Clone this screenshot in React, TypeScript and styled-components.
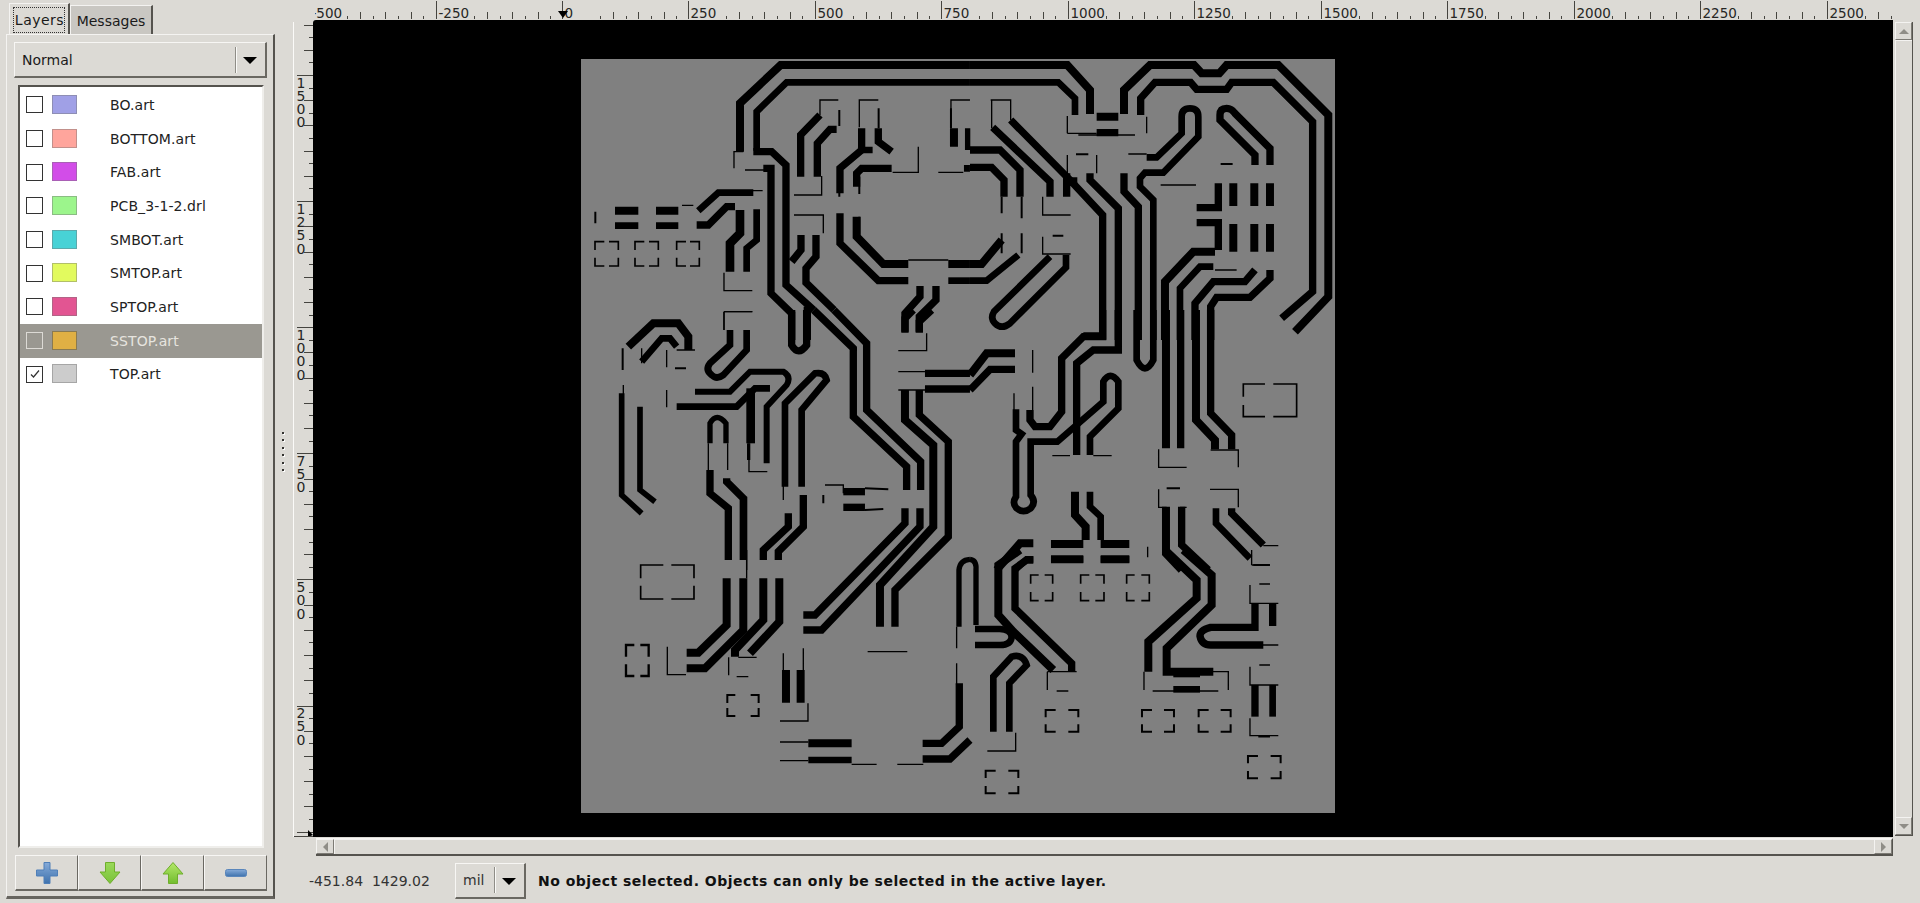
import React from "react";
import styled, { createGlobalStyle, css } from "styled-components";

const Global = createGlobalStyle`
  html, body { margin: 0; padding: 0; background: #dcdad5; overflow: hidden; }
  * { box-sizing: border-box; }
`;

const Root = styled.div`
  width: 1920px;
  height: 903px;
  display: flex;
  background: #dcdad5;
  color: #1a1a1a;
  font-family: "DejaVu Sans", sans-serif;
  font-size: 14px;
  overflow: hidden;
`;
const Sidebar = styled.div`
  width: 275px;
  padding: 4px 0 4px 6px;
  display: flex;
  flex-direction: column;
  flex: none;
`;
const TabBar = styled.div`
  display: flex;
  height: 30px;
  padding-left: 3px;
`;
const Tab = styled.div<{ $active?: boolean }>`
  display: flex;
  align-items: center;
  justify-content: center;
  height: 30px;
  border-top: 1px solid #f4f3f1;
  border-left: 1px solid #f4f3f1;
  border-right: 2px solid #55534e;
  padding-top: 1px;
  ${(p) =>
    p.$active
      ? css`
          width: 61px;
          background: #dcdad5;
          margin-top: -1px;
          height: 31px;
        `
      : css`
          width: 83px;
          background: #c9c7c2;
          margin-top: 1px;
          height: 29px;
        `}
`;
const TabFocus = styled.span`
  border: 1px dotted #333;
  padding: 2px 0 3px 1px;
  height: 26px;
  line-height: 20px;
  letter-spacing: 0.5px;
`;
const Notebook = styled.div`
  flex: 1;
  display: flex;
  flex-direction: column;
  border-top: 1px solid #f4f3f1;
  border-left: 1px solid #f4f3f1;
  border-right: 2px solid #55534e;
  border-bottom: 3px solid #67655f;
  padding: 7px 6px 5px 7px;
`;
const Combo = styled.div<{ $w?: number }>`
  display: flex;
  align-items: center;
  height: 36px;
  width: ${(p) => (p.$w ? `${p.$w}px` : "100%")};
  flex: none;
  border-top: 1px solid #f7f6f4;
  border-left: 1px solid #f7f6f4;
  border-right: 2px solid #6a6862;
  border-bottom: 2px solid #6a6862;
  padding-left: 7px;
  background: #dcdad5;
`;
const ComboText = styled.span`
  flex: 1;
`;
const ComboSep = styled.span`
  width: 2px;
  height: 26px;
  border-left: 1px solid #8f8d87;
  border-right: 1px solid #fafaf8;
`;
const ComboArrow = styled.span`
  width: 0;
  height: 0;
  margin: 2px 8px 0 6px;
  border-left: 7px solid transparent;
  border-right: 7px solid transparent;
  border-top: 7px solid #000;
`;
const LayerList = styled.div`
  margin: 7px 3px 0 4px;
  padding-top: 1px;
  flex: 1;
  background: #fff;
  border-top: 2px solid #55534e;
  border-left: 2px solid #55534e;
  border-right: 2px solid #efeeeb;
  border-bottom: 2px solid #efeeeb;
`;
const LayerRow = styled.div<{ $selected?: boolean }>`
  height: 33.7px;
  display: flex;
  align-items: center;
  padding-left: 6px;
  background: ${(p) => (p.$selected ? "#9a9891" : "#fff")};
  color: ${(p) => (p.$selected ? "#e6e4df" : "#222")};
`;
const Check = styled.span<{ $selected?: boolean }>`
  width: 17px;
  height: 17px;
  flex: none;
  display: flex;
  align-items: center;
  justify-content: center;
  border: 1.5px solid ${(p) => (p.$selected ? "#dcdad5" : "#333")};
  background: ${(p) => (p.$selected ? "#9a9891" : "#fff")};
`;
const Swatch = styled.span<{ $color: string; $selected?: boolean }>`
  width: 25px;
  height: 19px;
  flex: none;
  margin-left: 9px;
  margin-top: -1px;
  background: ${(p) => p.$color};
  border: 1px solid ${(p) => (p.$selected ? "#8a7a50" : "rgba(120,120,120,0.45)")};
`;
const LayerName = styled.span`
  margin-left: 33px;
  letter-spacing: 0.1px;
`;
const ButtonRow = styled.div`
  display: flex;
  height: 36px;
  margin-top: 7px;
  margin-left: 1px;
`;
const ToolButton = styled.div`
  flex: 1;
  display: flex;
  align-items: center;
  justify-content: center;
  border-top: 1px solid #f7f6f4;
  border-left: 1px solid #f7f6f4;
  border-right: 1px solid #6a6862;
  border-bottom: 2px solid #6a6862;
`;
const PaneHandle = styled.div`
  width: 18px;
  flex: none;
  display: flex;
  flex-direction: column;
  align-items: center;
  justify-content: center;
  gap: 5.4px;
  margin-left: -1px;
  margin-right: 1px;
`;
const HandleDot = styled.span`
  width: 2px;
  height: 2px;
  background: #33322f;
  box-shadow: 1px 1px 0 #fff;
`;
const Main = styled.div`
  flex: 1;
  display: flex;
  flex-direction: column;
`;
const CanvasGrid = styled.div`
  display: grid;
  grid-template-columns: 20px 1580px 2px 18px;
  grid-template-rows: 20px 817px;
`;
const Corner = styled.div``;
const TopRuler = styled.div`
  grid-column: 2 / 3;
  svg { display: block; }
`;
const Spacer = styled.div`
  grid-column: 3 / 5;
`;
const SideRuler = styled.div`
  border-left: 1px solid #fbfaf8;
  margin-top: 2px;
  svg { display: block; }
`;
const Canvas = styled.div`
  background: #000;
  border-top-left-radius: 3px;
  overflow: hidden;
  svg { display: block; }
`;
const Gap = styled.div``;
const VScroll = styled.div`
  margin-top: 2px;
  height: 814px;
  display: flex;
  flex-direction: column;
  border-right: 1px solid #55534e;
  border-bottom: 1px solid #55534e;
`;
const HScroll = styled.div`
  margin: 1px 0 0 23px;
  width: 1577px;
  height: 18px;
  display: flex;
  border-bottom: 2px solid #55534e;
  border-right: 1px solid #55534e;
  border-top: 1px solid #f7f6f4;
`;
const ScrollTrough = styled.div`
  flex: 1;
  background: #dcdad5;
  border-top: 1px solid #f4f3f1;
  border-left: 1px solid #f4f3f1;
`;
const ScrollButton = styled.div<{ $h?: boolean }>`
  width: ${(p) => (p.$h ? "18px" : "100%")};
  height: ${(p) => (p.$h ? "100%" : "18px")};
  flex: none;
  display: flex;
  align-items: center;
  justify-content: center;
  background: #dcdad5;
  border: 1px solid #7d7b75;
  border-top-color: #f4f3f1;
  border-left-color: #f4f3f1;
`;
const Tri = styled.span<{ $dir: "up" | "down" | "left" | "right" }>`
  width: 0;
  height: 0;
  ${(p) =>
    p.$dir === "up" || p.$dir === "down"
      ? css`
          border-left: 5px solid transparent;
          border-right: 5px solid transparent;
          border-${p.$dir === "up" ? "bottom" : "top"}: 5px solid #8f8d87;
        `
      : css`
          border-top: 5px solid transparent;
          border-bottom: 5px solid transparent;
          border-${p.$dir === "left" ? "right" : "left"}: 5px solid #8f8d87;
        `}
`;
const StatusBar = styled.div`
  height: 35px;
  margin-top: 7px;
  padding-left: 16px;
  display: flex;
  align-items: center;
  white-space: pre;
  color: #333;
`;
const Coords = styled.span`
  width: 146px;
  font-size: 14px;
`;
const StatusMessage = styled.span`
  margin-left: 12px;
  font-weight: 700;
  letter-spacing: 0.5px;
  color: #111;
`;

/* Each tile's paths use coordinates of a 3x view onto the board. */
const bracket = (a: number, b: number, c: number, d: number, ax: number, ay: number) =>
  `M${a + ax} ${b}H${a}V${b + ay}M${c - ax} ${b}H${c}V${b + ay}M${a} ${d - ay}V${d}H${a + ax}M${c} ${d - ay}V${d}H${c - ax}`;

type Trace = [number, string];
const tiles: { x: number; y: number; traces: Trace[] }[] = [
  {
    x: 570,
    y: 40,
    traces: [
      [22, "M510 335V190L632 75H1200"],
      [18, "M560 332V215L650 127H1200"],
      [20, "M550 335H605L648 375V735L731 810"],
      [20, "M580 385H603V760L665 820V900"],
      [20, "M693 585V630L665 665"],
      [20, "M738 585V650L708 685V728L792 810"],
      [20, "M712 800V900"],
      [20, "M750 225L692 285V410"],
      [20, "M800 268H780L742 310V410"],
      [20, "M875 265V330L810 385V460"],
      [20, "M925 265V305L965 335"],
      [18, "M875 330H908"],
      [20, "M965 385H875L860 400V440"],
      [20, "M810 520V610L925 722H1015"],
      [22, "M860 530V590L940 672H1015"],
      [22, "M1135 672H1200"],
      [18, "M1135 722H1200"],
      [20, "M1050 738V770L1005 820V878"],
      [20, "M1098 738V780L1048 830V878"],
      [18, "M385 512L445 458H550"],
      [20, "M380 555H415L470 500H495"],
      [22, "M135 512H205M258 512H325"],
      [18, "M135 557H205M258 557H325"],
      [24, "M510 510V580L480 610V695"],
      [18, "M560 508V600L530 625V695"],
      [22, "M1152 265V320"],
      [14, "M1193 330V265"],
      [18, "M1182 385H1200"],
      [4, "M750 225V180H805M868 262V180H925M1143 265V180H1200M492 385V335H520M525 390H585M495 452H578M336 496H370M672 465H755V408M672 525H760V580M968 397H1045V320M1105 397H1180M1015 660H1135M462 698V752H547M462 815H547M462 815V870"],
      [6, "M808 210V258M926 205V265M1143 205V265M76 515V550M808 400V470M868 410V462M808 525V590M868 530V590"],
      [5, bracket(75, 605, 145, 678, 28, 25)],
      [5, bracket(195, 605, 265, 678, 28, 25)],
      [5, bracket(320, 605, 388, 678, 28, 25)],
    ],
  },
  {
    x: 970,
    y: 40,
    traces: [
      [22, "M0 75H292L360 150V222"],
      [18, "M0 127H265L315 175V225"],
      [22, "M380 230H445"],
      [20, "M380 278H445"],
      [22, "M462 222V150L540 75H672L695 100H748L770 75H925L1075 225V770L975 875"],
      [20, "M512 225V175L555 127H662L680 148H770L785 127H910L1028 245V755L935 835"],
      [18, "M530 352H560L635 280V230Q635 205 660 205Q685 205 685 230V290L580 398H525L510 415V440L550 480V900"],
      [20, "M855 375V345L750 240V225Q750 205 770 205Q785 205 795 220L900 325V375"],
      [20, "M122 240L300 420L398 525V888H340"],
      [20, "M68 262L240 425V470"],
      [20, "M290 400V470"],
      [20, "M360 400V420L445 505V900"],
      [20, "M462 400V455L505 500V900"],
      [20, "M0 330H90L150 390V470"],
      [20, "M0 382H65L102 420V470"],
      [22, "M95 600L35 672H0"],
      [18, "M145 645L50 722H0"],
      [18, "M240 650L72 815Q60 835 75 850Q95 870 120 850L288 682V645"],
      [24, "M282 425H322"],
      [20, "M745 430V503H680M680 548H745V630"],
      [22, "M790 430V498M790 552V635M853 430V498M853 552V635M900 430V498M900 552V635"],
      [22, "M735 635H670L585 725V900"],
      [18, "M730 680H690L630 745V900"],
      [20, "M855 690L825 725H730L675 790V900"],
      [20, "M900 690V715L840 772H740L722 800V900"],
      [4, "M292 280V228M292 280H380M530 230V280M325 285H495M292 345V400M380 345V400M475 342H530M218 470V525H302M218 590V642H302M572 435H678M735 690H800M62 180H122V240M65 180V265"],
      [6, "M318 343H355M248 587H280M95 470V520M155 470V535M95 580V640M155 580V640M752 372H788"],
    ],
  },
  {
    x: 570,
    y: 310,
    traces: [
      [22, "M175 110L250 40H325L355 80V120"],
      [18, "M215 155L275 85H300L320 110"],
      [15, "M155 250V555L215 610"],
      [15, "M210 290V540L255 575"],
      [18, "M480 60V105L420 160Q405 180 425 195Q440 210 460 195L530 120V60"],
      [16, "M375 245H480L540 185H640Q665 200 650 225L590 290V460"],
      [18, "M320 290H500L555 235H600"],
      [24, "M542 235V400"],
      [10, "M536 400V450"],
      [14, "M420 400V340Q440 305 468 340V400"],
      [20, "M420 480V550L475 595V750"],
      [20, "M470 505V515L520 565V750"],
      [18, "M645 530V280L735 190Q765 185 770 210L695 300V530"],
      [20, "M655 610V650L580 720V750"],
      [20, "M700 555V650L625 725V750"],
      [20, "M820 545H885"],
      [20, "M820 592H885"],
      [6, "M885 535L955 538M885 600L940 597"],
      [20, "M665 0V105Q685 140 710 105V0"],
      [20, "M731 0L850 115V320L1010 470V540"],
      [20, "M792 0L890 100V300L1052 455V540"],
      [20, "M1005 595V640L735 915H700"],
      [20, "M1050 595V650L755 960H700"],
      [22, "M1005 240V330L1090 405V650L930 825V950"],
      [20, "M1048 240V315L1135 395V680L975 840V950"],
      [20, "M1005 65V25L1030 0"],
      [20, "M1048 65V35L1085 0"],
      [20, "M1065 190H1200M1065 237H1200"],
      [4, "M160 225V290M215 115V160M290 120V172M290 240V292M320 120H375M462 5V60M462 5H547M537 400V485H592M765 525H820V550M1070 70V122H985M985 185H1065M985 240H1070M530 560V780M415 400V480M473 400V480M640 525V570"],
      [6, "M158 115V180M315 175H348M760 555V580"],
      [8, "M705 555V610"],
    ],
  },
  {
    x: 970,
    y: 310,
    traces: [
      [22, "M0 195L50 130H135"],
      [20, "M0 240L60 178H135"],
      [20, "M398 0V80H340L275 145V305L240 350H195L180 330V300"],
      [20, "M445 0V120H370L320 160V435"],
      [18, "M138 298V360L155 372L138 395V560Q125 580 140 595Q160 612 182 595Q200 575 182 555V395H262L400 275V215Q420 180 445 215V295L360 380V435"],
      [18, "M500 0V150Q525 200 550 150V0"],
      [22, "M588 0V415"],
      [20, "M632 0V415"],
      [22, "M678 0V330L735 390V418"],
      [20, "M722 0V310L785 375V418"],
      [22, "M315 545V615L347 650V690"],
      [18, "M360 545V590L392 620V690"],
      [22, "M243 702H340M392 702H478"],
      [18, "M243 748H340M392 748H478"],
      [22, "M80 780L150 700H190"],
      [18, "M135 780L170 748H190"],
      [22, "M588 590V730L635 780"],
      [20, "M635 590V705L715 780"],
      [18, "M738 595V640L840 745"],
      [20, "M785 595V610L880 705"],
      [5, "M820 260V222H885M910 222H980V320H910M885 320H820V285"],
      [4, "M188 120V188M132 250V300M188 230V300M247 437H300M370 437H425M566 418V472H650M722 420H805V472M720 538H805V592M566 538V592H590M630 592H650M533 710V742M880 707H925M845 720V765"],
      [6, "M590 535H630M850 765H900"],
    ],
  },
  {
    x: 570,
    y: 550,
    traces: [
      [22, "M470 85V225L385 308H350"],
      [22, "M520 85V240L405 355H350"],
      [22, "M580 85V210L495 300V320"],
      [22, "M628 85V215L540 310"],
      [22, "M648 360V458M692 360V458"],
      [22, "M715 580H845"],
      [18, "M715 630H845"],
      [20, "M1058 580H1115L1168 530V400"],
      [20, "M1058 627H1140L1200 570"],
      [14, "M1167 230V60Q1170 30 1200 28"],
      [5, bracket(212, 45, 372, 147, 68, 40)],
      [7, bracket(168, 285, 236, 378, 25, 35)],
      [6, bracket(472, 435, 566, 498, 24, 24)],
      [4, "M292 290V374H348M476 322V376M505 322H560M500 380H535M640 310V360M700 295V360M630 513H714V460M630 576H715M630 632H715M845 643H920M982 643H1060M893 305H1012M1160 230V295M1160 340V405M530 0V85"],
    ],
  },
  {
    x: 970,
    y: 550,
    traces: [
      [14, "M0 28Q20 30 18 60V225"],
      [18, "M15 237H90Q125 240 125 262Q122 285 90 285H15"],
      [22, "M150 0L85 45V195L130 245L250 360"],
      [20, "M190 30H170L135 55V175L305 340V365"],
      [22, "M243 28H340M392 28H478"],
      [22, "M585 0L680 90V145L535 275V365"],
      [22, "M640 0L725 75V165L590 295V365H730"],
      [22, "M610 370H690"],
      [18, "M610 418H690"],
      [20, "M855 160V232H722Q690 240 690 258Q695 285 722 285H880"],
      [20, "M908 160V228"],
      [20, "M855 405V500"],
      [18, "M908 405V500"],
      [18, "M70 545V380L125 320Q160 310 170 345L118 400V545"],
      [5, bracket(182, 75, 248, 152, 24, 26)],
      [5, bracket(332, 75, 402, 152, 26, 26)],
      [5, bracket(470, 75, 538, 152, 24, 26)],
      [6, bracket(227, 480, 325, 545, 30, 22)],
      [6, bracket(516, 480, 612, 545, 30, 22)],
      [6, bracket(686, 480, 782, 545, 30, 22)],
      [6, bracket(47, 662, 145, 730, 30, 22)],
      [6, bracket(834, 618, 932, 685, 30, 22)],
      [4, "M232 365V420M232 365H320M522 365V420M548 423H745M600 365H775V420M840 105V160H925M840 350V405H925M840 505V557H925M52 603H137V548M840 285H925M845 45H898"],
      [5, "M260 423H295M868 102H900M868 345H900M865 560H900"],
    ],
  },
];

const Board = () => (
  <svg width={1580} height={817} viewBox="313 20 1580 817">
    <rect x={581} y={59} width={754} height={754} fill="#808080" />
    {tiles.map((t) => (
      <g key={`${t.x}-${t.y}`} transform={`translate(${t.x} ${t.y}) scale(0.3333)`} fill="none" stroke="#000" strokeLinejoin="miter">
        {t.traces.map(([w, d], i) => (
          <path key={i} d={d} strokeWidth={w >= 14 ? w + 2 : w} />
        ))}
      </g>
    ))}
  </svg>
);

const PX = 126.45;
const ORIGIN_X = 562 - 313;

const TopRulerArt = () => {
  const labels = [-500, -250, 0, 250, 500, 750, 1000, 1250, 1500, 1750, 2000, 2250, 2500];
  return (
    <svg width={1580} height={20} viewBox="0 0 1580 20">
      <defs>
        <clipPath id="topclip">
          <rect x={2} y={0} width={1578} height={20} />
        </clipPath>
      </defs>
      <g clipPath="url(#topclip)">
        {labels.map((v) => {
          const x = Math.round(ORIGIN_X + (v / 250) * PX) + 0.5;
          return (
            <g key={v}>
              <line x1={x} x2={x} y1={1} y2={19} stroke="#45443f" />
              {[3, 4, 5, 6, 7, 8, 9].map((k) => {
                const tx = Math.round(x + (k * PX) / 10) + 0.5;
                return <line key={k} x1={tx} x2={tx} y1={k % 2 ? 16 : 12} y2={19} stroke="#45443f" />;
              })}
              <text x={x + 2} y={18} fontFamily="DejaVu Sans" fontSize={13.5} fill="#262624">
                {v}
              </text>
            </g>
          );
        })}
      </g>
      <path d="M245 11H255L250 18Z" fill="#000" />
    </svg>
  );
};

const SideRulerArt = () => {
  const labels = [1500, 1250, 1000, 750, 500, 250, 0];
  const offset = 75 - 22;
  return (
    <svg width={19} height={815} viewBox="0 0 19 815">
      {labels.map((v, n) => {
        const y = offset + n * 126.1;
        const major = Math.round(y) + 0.5;
        return (
          <g key={v}>
            <line x1={3} x2={19} y1={major} y2={major} stroke="#45443f" />
            {[1, 2, 3, 4, 5, 6, 7, 8, 9].map((k) => {
              const ty = Math.round(y - (k * 126.1) / 10) + 0.5;
              return <line key={k} x1={k % 2 ? 15 : 10} x2={19} y1={ty} y2={ty} stroke="#45443f" />;
            })}
            {v !== 0 &&
              String(v)
                .split("")
                .map((c, i) => (
                  <text key={i} x={7} y={y + 12.5 + i * 13.3} textAnchor="middle" fontFamily="DejaVu Sans" fontSize={14} fill="#262624">
                    {c}
                  </text>
                ))}
          </g>
        );
      })}
      <path d="M14 808L19 813L14 815Z" fill="#000" />
      <line x1={0} x2={19} y1={814.5} y2={814.5} stroke="#45443f" />
    </svg>
  );
};

const BluePlus = () => (
  <svg width={24} height={24} viewBox="0 0 24 24">
    <defs>
      <linearGradient id="blue" x1="0" y1="0" x2="0" y2="1">
        <stop offset="0" stopColor="#86abd9" />
        <stop offset="1" stopColor="#3e72ad" />
      </linearGradient>
    </defs>
    <path d="M9 1.5H15V9H22.5V15H15V22.5H9V15H1.5V9H9Z" fill="url(#blue)" stroke="#4f7fb8" strokeLinejoin="round" />
  </svg>
);
const BlueMinus = () => (
  <svg width={24} height={10} viewBox="0 0 24 10">
    <rect x={1.5} y={1.5} width={21} height={7} rx={2} fill="url(#blue)" stroke="#5a86bb" />
  </svg>
);
const GreenArrow = ({ up }: { up?: boolean }) => (
  <svg width={22} height={24} viewBox="0 0 22 24">
    <defs>
      <linearGradient id={up ? "gu" : "gd"} x1="0" y1="0" x2="0" y2="1">
        <stop offset="0" stopColor={up ? "#b4e86a" : "#9ad95a"} />
        <stop offset="1" stopColor={up ? "#72bd2e" : "#7ac23a"} />
      </linearGradient>
    </defs>
    <path
      d={up ? "M11 1.5L21 13H15.5V22.5H6.5V13H1Z" : "M6.5 1.5H15.5V11H21L11 22.5L1 11H6.5Z"}
      fill={`url(#${up ? "gu" : "gd"})`}
      stroke="#6fae2c"
      strokeLinejoin="round"
    />
  </svg>
);

const layers = [
  { name: "BO.art", color: "#a0a0e6" },
  { name: "BOTTOM.art", color: "#ffa59c" },
  { name: "FAB.art", color: "#d24de8" },
  { name: "PCB_3-1-2.drl", color: "#9cf58c" },
  { name: "SMBOT.art", color: "#48d2d6" },
  { name: "SMTOP.art", color: "#e2fa5e" },
  { name: "SPTOP.art", color: "#e25592" },
  { name: "SSTOP.art", color: "#e0b044", selected: true },
  { name: "TOP.art", color: "#cccccc", checked: true },
];

export default function App() {
  return (
    <Root>
      <Global />
      <Sidebar>
        <TabBar>
          <Tab $active>
            <TabFocus>Layers</TabFocus>
          </Tab>
          <Tab>Messages</Tab>
        </TabBar>
        <Notebook>
          <Combo>
            <ComboText>Normal</ComboText>
            <ComboSep />
            <ComboArrow />
          </Combo>
          <LayerList>
            {layers.map((l) => (
              <LayerRow key={l.name} $selected={l.selected}>
                <Check $selected={l.selected}>
                  {l.checked && (
                    <svg width={12} height={12} viewBox="0 0 12 12">
                      <path d="M2 6.5L4.5 9L10 2.5" fill="none" stroke="#333" strokeWidth={1.2} />
                    </svg>
                  )}
                </Check>
                <Swatch $color={l.color} $selected={l.selected} />
                <LayerName>{l.name}</LayerName>
              </LayerRow>
            ))}
          </LayerList>
          <ButtonRow>
            <ToolButton>
              <BluePlus />
            </ToolButton>
            <ToolButton>
              <GreenArrow />
            </ToolButton>
            <ToolButton>
              <GreenArrow up />
            </ToolButton>
            <ToolButton>
              <BlueMinus />
            </ToolButton>
          </ButtonRow>
        </Notebook>
      </Sidebar>
      <PaneHandle>
        {[0, 1, 2, 3, 4, 5].map((i) => (
          <HandleDot key={i} />
        ))}
      </PaneHandle>
      <Main>
        <CanvasGrid>
          <Corner />
          <TopRuler>
            <TopRulerArt />
          </TopRuler>
          <Spacer />
          <SideRuler>
            <SideRulerArt />
          </SideRuler>
          <Canvas>
            <Board />
          </Canvas>
          <Gap />
          <VScroll>
            <ScrollButton>
              <Tri $dir="up" />
            </ScrollButton>
            <ScrollTrough />
            <ScrollButton>
              <Tri $dir="down" />
            </ScrollButton>
          </VScroll>
        </CanvasGrid>
        <HScroll>
          <ScrollButton $h>
            <Tri $dir="left" />
          </ScrollButton>
          <ScrollTrough />
          <ScrollButton $h>
            <Tri $dir="right" />
          </ScrollButton>
        </HScroll>
        <StatusBar>
          <Coords>-451.84  1429.02</Coords>
          <Combo $w={71}>
            <ComboText>mil</ComboText>
            <ComboSep />
            <ComboArrow />
          </Combo>
          <StatusMessage>No object selected. Objects can only be selected in the active layer.</StatusMessage>
        </StatusBar>
      </Main>
    </Root>
  );
}
